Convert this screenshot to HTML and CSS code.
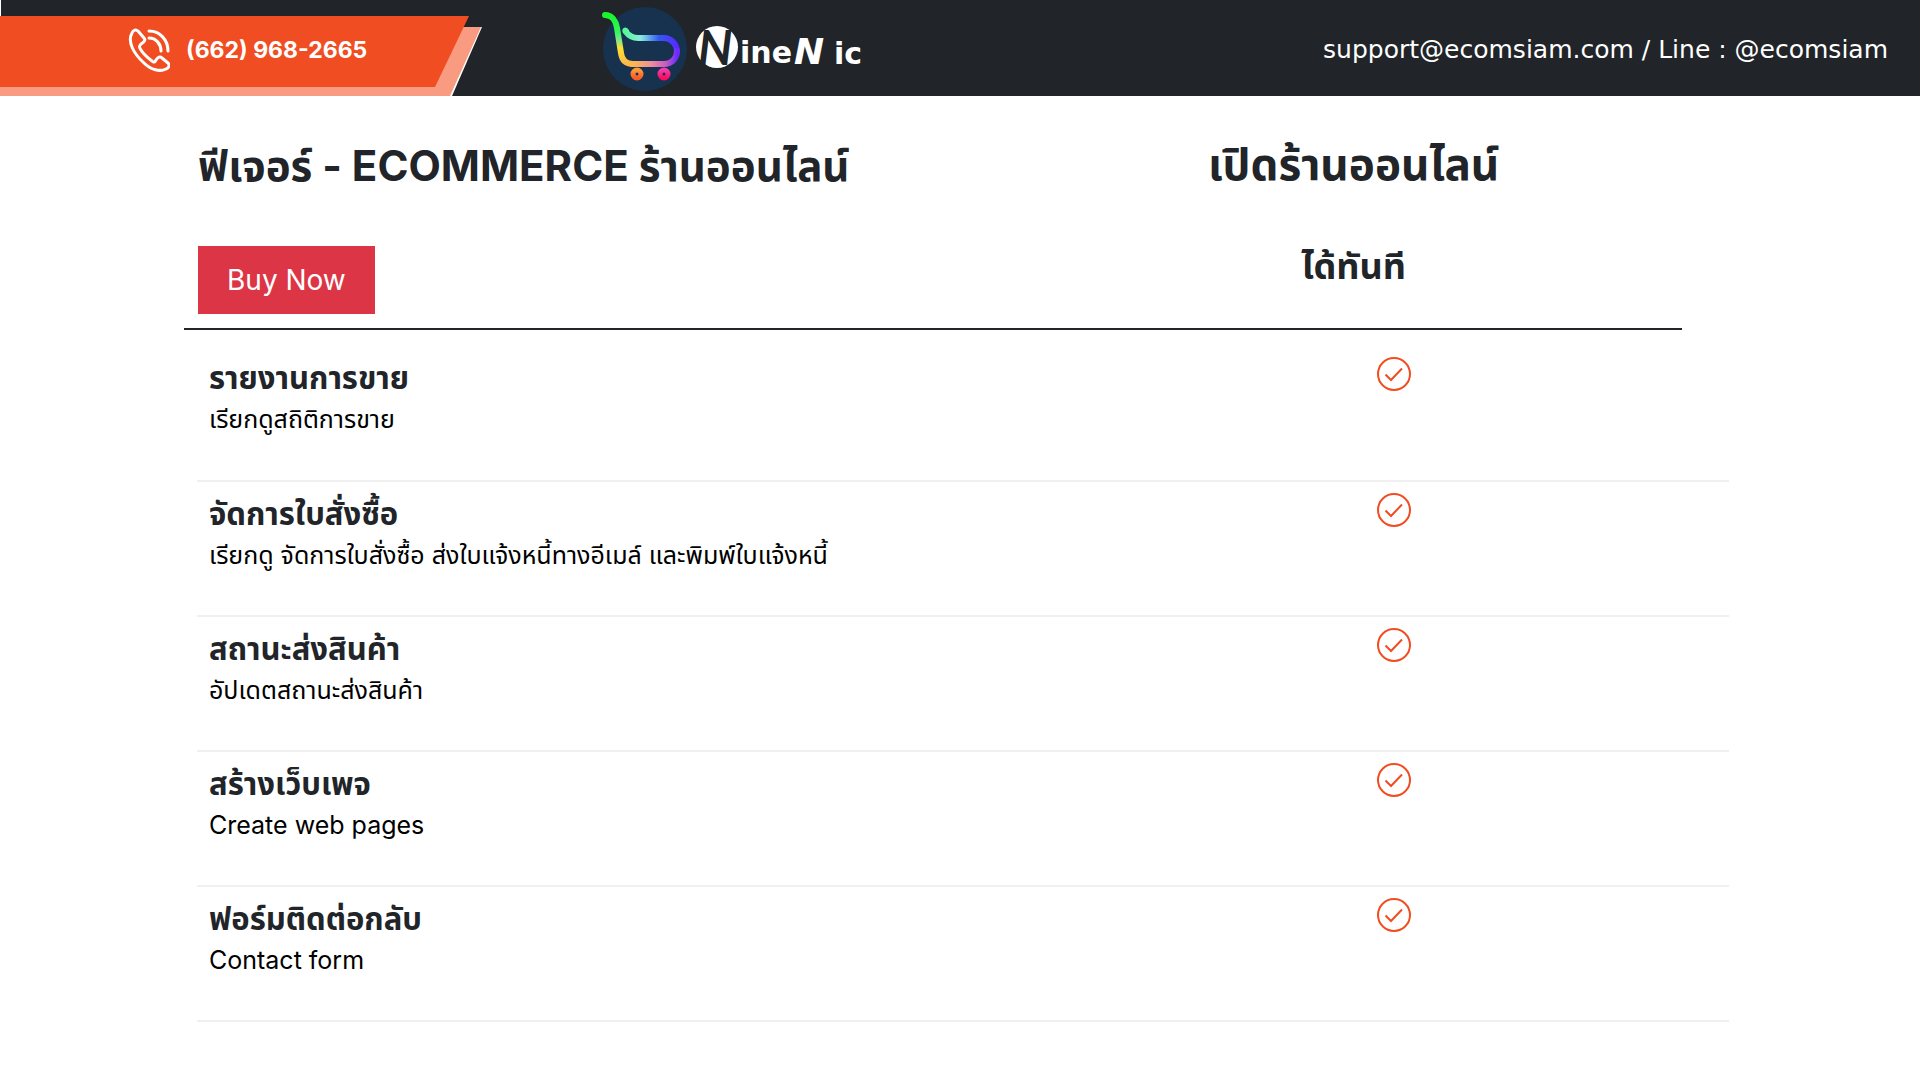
FILE: index.html
```
<!DOCTYPE html>
<html lang="th">
<head>
<meta charset="utf-8">
<meta name="viewport" content="width=device-width, initial-scale=1">
<title>NineNic - Ecommerce</title>
<link rel="stylesheet" href="styles.css">
</head>
<body>

<!-- check icon used in every row -->
<svg class="sprite" aria-hidden="true">
<symbol id="check" viewBox="0 0 36 36">
<circle cx="18" cy="18" r="16" fill="none" stroke="#f14d22" stroke-width="2"/>
<path d="M9.500 18.500l5.500 5.500L26 12.500" fill="none" stroke="#f14d22" stroke-width="2"/>
</symbol>
</svg>

<header class="topbar">
<div class="phone">
<svg class="ribbon" viewBox="0 0 482 96" aria-hidden="true">
<path d="M0 0h1v17H0z" fill="#fff"/>
<path d="M0 27H482L452 96H0z" fill="#fff"/>
<path d="M0 27H481L450 96H0z" fill="#f89b81"/>
<path d="M0 16H469L435 87H0z" fill="#f14d22"/>
</svg>
<a class="phone_link" href="tel:6629682665">
<svg class="phone_icon" viewBox="0 0 42 44" aria-hidden="true" fill="none" stroke="#fff" stroke-width="3" stroke-linecap="round" stroke-linejoin="round">
<path d="M4 5C5 2 8 1 10 3l6 7c2 2 0 4-3 6c-2 2-2 3 0 6c3 5 7 8 11 11c2 2 3 1 4-1c2-3 4-4 6-2l6 5c2 2 1 5-2 6c-6 3-15 1-22-6C6 26-1 14 4 5z"/>
<path d="M21 3c11 0 19 9 19 20M21 10c7 0 12 6 12 13"/>
</svg>
<span>(662) 968-2665</span>
</a>
</div>

<a class="logo" href="#" aria-label="NineNic">
<svg class="logo_svg" viewBox="0 0 266 90" aria-hidden="true">
<defs>
<linearGradient id="handle" x1="0" y1="0" x2="0" y2="1">
<stop offset="0" stop-color="#19f52c"/>
<stop offset=".35" stop-color="#35f65a"/>
<stop offset=".5" stop-color="#79e98f"/>
<stop offset=".68" stop-color="#ffe02e"/>
<stop offset="1" stop-color="#fbb84c"/>
</linearGradient>
<linearGradient id="basket" x1="0" y1="0" x2="1" y2="0">
<stop offset="0" stop-color="#58f79b"/>
<stop offset=".3" stop-color="#8ce9dc"/>
<stop offset=".65" stop-color="#3159f5"/>
<stop offset="1" stop-color="#5a29ff"/>
</linearGradient>
<linearGradient id="floor" x1="0" y1="0" x2="1" y2="0">
<stop offset="0" stop-color="#fbb84c"/>
<stop offset=".4" stop-color="#ef8f9c"/>
<stop offset=".75" stop-color="#c85cc5"/>
<stop offset="1" stop-color="#6a2cfa"/>
</linearGradient>
<linearGradient id="wheel1" x1="0" y1="0" x2="0" y2="1">
<stop offset="0" stop-color="#fb9a3c"/>
<stop offset="1" stop-color="#fb5b25"/>
</linearGradient>
<linearGradient id="wheel2" x1="0" y1="0" x2="0" y2="1">
<stop offset="0" stop-color="#f23ca9"/>
<stop offset="1" stop-color="#ff0a63"/>
</linearGradient>
</defs>
<circle cx="45" cy="46" r="42" fill="#16324f"/>
<g fill="none" stroke-width="6" stroke-linecap="round">
<path d="M5 12c7 0 11 6 12 13l4 25c1 8 6 11 12 11" stroke="url(#handle)"/>
<path d="M26 28c-1-1-1 0 0 1c3 4 7 6 12 6h26c7 0 13 6 13 14" stroke="url(#basket)"/>
<path d="M33 61h31c8 0 13-6 13-13" stroke="url(#floor)"/>
</g>
<circle cx="37" cy="71" r="4" fill="none" stroke="url(#wheel1)" stroke-width="5"/>
<circle cx="64" cy="71" r="4" fill="none" stroke="url(#wheel2)" stroke-width="5"/>
<circle cx="117" cy="44" r="21" fill="#fff"/>
<text class="logo_n" x="98" y="62">N</text>
<text class="logo_word" x="140" y="60">ine</text>
<text class="logo_n2" x="194" y="61">N</text>
<text class="logo_word" x="234" y="61">ic</text>
</svg>
</a>

<p class="contact"><a href="mailto:support@ecomsiam.com">support@ecomsiam.com</a> / Line : @ecomsiam</p>
</header>

<main>
<section class="plan">
<div class="plan_left">
<h1>ฟีเจอร์ - ECOMMERCE ร้านออนไลน์</h1>
<button type="button" class="buy">Buy Now</button>
</div>
<div class="plan_right">
<h2>เปิดร้านออนไลน์</h2>
<h3>ได้ทันที</h3>
</div>
</section>

<table class="features">
<tr>
<th scope="row">รายงานการขาย<p>เรียกดูสถิติการขาย</p></th>
<td><svg class="check" role="img" aria-label="yes"><use href="#check"/></svg></td>
</tr>
<tr>
<th scope="row">จัดการใบสั่งซื้อ<p>เรียกดู จัดการใบสั่งซื้อ ส่งใบแจ้งหนี้ทางอีเมล์ และพิมพ์ใบแจ้งหนี้</p></th>
<td><svg class="check" role="img" aria-label="yes"><use href="#check"/></svg></td>
</tr>
<tr>
<th scope="row">สถานะส่งสินค้า<p>อัปเดตสถานะส่งสินค้า</p></th>
<td><svg class="check" role="img" aria-label="yes"><use href="#check"/></svg></td>
</tr>
<tr>
<th scope="row">สร้างเว็บเพจ<p>Create web pages</p></th>
<td><svg class="check" role="img" aria-label="yes"><use href="#check"/></svg></td>
</tr>
<tr>
<th scope="row">ฟอร์มติดต่อกลับ<p>Contact form</p></th>
<td><svg class="check" role="img" aria-label="yes"><use href="#check"/></svg></td>
</tr>
</table>
</main>

</body>
</html>
```
FILE: styles.css
```
* {box-sizing:border-box;}
body {margin:0; background-color:#fff; color:#212529; font-family:Inter, "Noto Sans Thai", "Noto Sans", sans-serif;}
h1, h2, h3, p {margin:0;}
a {color:inherit; text-decoration:none;}
.sprite {position:absolute; width:0; height:0;}

/* top bar */
.topbar {display:flex; align-items:center; height:96px; background-color:#212529; color:#fff;}
.phone {display:grid; flex:none;}
.ribbon {grid-area:1 / 1; display:block; width:482px; height:96px;}
.phone_link {grid-area:1 / 1; display:flex; align-items:center; gap:16px; padding:12px 0 8px 128px; font-size:23px; font-weight:700;}
.phone_icon {width:42px; height:44px;}
.logo {flex:none; margin-left:118px;}
.logo_svg {display:block; width:266px; height:90px;}
.logo_n {font:italic bold 48px Lato, sans-serif; fill:#212529;}
.logo_word {font:bold 30px "DejaVu Sans", sans-serif; fill:#fff;}
.logo_n2 {font:italic bold 36px "DejaVu Sans", sans-serif; fill:#fff;}
.contact {margin-left:auto; padding:2px 32px 0 0; font-family:"DejaVu Sans", sans-serif; font-size:25px;}

/* plan heading */
.plan {display:flex; width:78%; margin-left:184px; padding:40px 0 14px 14px; border-bottom:2px solid #212529;}
.plan_left {flex:1;}
.plan_right {width:656px; text-align:center;}
.plan h1, .plan h2 {height:110px; font-size:42px; line-height:60px; white-space:nowrap;}
.plan h2 {font-size:44px; line-height:56px;}
.plan h3 {font-size:36px; line-height:40px;}
.buy {height:68px; padding:0 28px; border:1px solid #dc3545; background-color:#dc3545; color:#fff; font-family:inherit; font-size:28px;}

/* feature rows */
.features {width:calc(100% - 388px); margin:16px 0 0 197px; border-collapse:collapse;}
.features th, .features td {height:135px; padding:10px 12px; border-bottom:2px solid #f0f0f0; vertical-align:top;}
.features th {text-align:left; font-size:31px; line-height:44px;}
.features p {color:#000; font-size:25px; font-weight:normal; line-height:38px;}
.features td {width:670px; text-align:center;}
.check {width:36px; height:36px;}
```
